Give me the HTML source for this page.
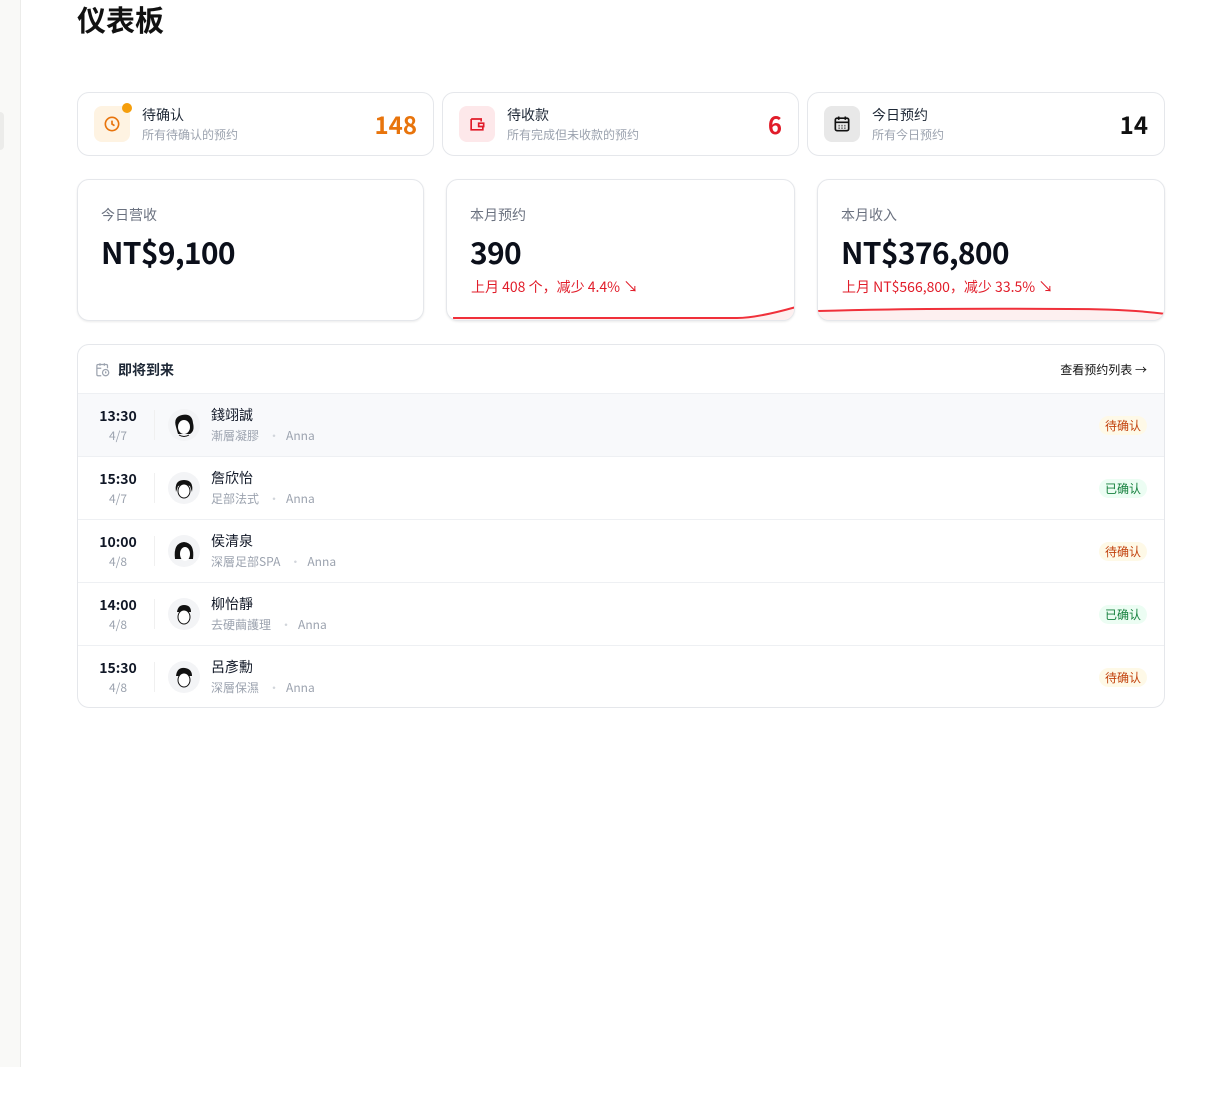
<!DOCTYPE html>
<html><head><meta charset="utf-8"><style>
*{box-sizing:border-box;margin:0;padding:0}
body{width:1220px;height:1100px;background:#fff;font-family:"Noto Sans CJK SC","Liberation Sans",sans-serif;color:#111827;position:relative;overflow:hidden}
.side{position:absolute;left:0;top:0;width:21px;height:1067px;background:#f9f9f7;border-right:1px solid #ececea}
.side i{position:absolute;left:0;top:112px;width:4px;height:38px;background:#ececea;border-radius:0 4px 4px 0}
h1{position:absolute;left:77px;top:-1px;font-size:29px;font-weight:700;line-height:40px;color:#111}
.c1{position:absolute;top:92px;height:64px;border:1px solid #e5e7eb;border-radius:12px;background:#fff}
.ic{position:absolute;left:16px;top:13px;width:36px;height:36px;border-radius:8px;display:flex;align-items:center;justify-content:center}
.t{position:absolute;left:64px;top:12px;font-size:14px;line-height:20px;color:#1f2937}
.s{position:absolute;left:64px;top:33px;font-size:12px;line-height:17px;color:#9ca3af}
.n{position:absolute;right:16px;top:15px;font-size:24px;line-height:32px;font-weight:700}
.c2{position:absolute;top:179px;height:142px;border:1px solid #e5e7eb;border-radius:12px;background:#fff;box-shadow:0 1px 2px rgba(0,0,0,.08);overflow:hidden}
.lb{position:absolute;left:23px;top:25px;font-size:14px;line-height:20px;color:#6b7280}
.v{position:absolute;left:23px;top:50px;font-size:30px;line-height:42px;font-weight:700;color:#0b0f1a;letter-spacing:-0.7px}
.d{position:absolute;left:24px;top:97px;font-size:14px;line-height:20px;color:#e11d2a}
.list{position:absolute;left:77px;top:344px;width:1088px;height:364px;border:1px solid #e5e7eb;border-radius:12px;overflow:hidden;background:#fff}
.hd{height:49px;border-bottom:1px solid #eef0f3;position:relative}
.hd b{position:absolute;left:40px;top:15px;font-size:14px;line-height:20px;color:#1f2937}
.hd span{position:absolute;right:17px;top:16px;font-size:12px;line-height:17px;color:#111}
.row{height:63px;border-bottom:1px solid #eef0f3;position:relative}
.row:last-child{border-bottom:none}
.tm{position:absolute;left:20px;top:12px;width:40px;text-align:center;font-size:14px;line-height:20px;font-weight:700;color:#111827}
.dt{position:absolute;left:20px;top:33px;width:40px;text-align:center;font-size:12px;line-height:17px;color:#9ca3af}
.sep{position:absolute;left:76px;top:16px;width:1px;height:30px;background:#f0f0f0}
.av{position:absolute;left:90px;top:15px;width:32px;height:32px;border-radius:50%;background:#f3f4f6;overflow:hidden}
.nm{position:absolute;left:133px;top:11px;font-size:14px;line-height:20px;color:#111827}
.sub{position:absolute;left:133px;top:33px;font-size:12px;line-height:17px;color:#9ca3af}
.sub em{font-style:normal;margin:0 6px 0 9px;color:#d1d5db}
.bd{position:absolute;right:17px;top:22px;font-size:12px;line-height:17px;padding:1px 6px;border-radius:10px}
.p{background:#fef9e7;color:#c2410c}.ok{background:#ecfdf3;color:#15803d}
</style></head><body>
<div class="side"><i></i></div>
<h1>仪表板</h1>

<div class="c1" style="left:77px;width:357px">
<div class="ic" style="background:#fef3e2"><svg width="20" height="20" viewBox="0 0 24 24" fill="none" stroke="#e8740c" stroke-width="2"><circle cx="12" cy="12" r="8"/><path d="M12 8v4l3 2"/></svg></div>
<div style="position:absolute;left:44px;top:10px;width:10px;height:10px;border-radius:50%;background:#f59e0b"></div>
<div class="t">待确认</div><div class="s">所有待确认的预约</div><div class="n" style="color:#e8740c">148</div></div>
<div class="c1" style="left:442px;width:357px">
<div class="ic" style="background:#fde8ea"><svg width="20" height="20" viewBox="0 0 24 24" fill="none" stroke="#e11d2a" stroke-width="2"><path d="M5 6h12v3M5 6v13h14v-4"/><path d="M14 11h6v4h-6z"/></svg></div>
<div class="t">待收款</div><div class="s">所有完成但未收款的预约</div><div class="n" style="color:#e11d2a">6</div></div>
<div class="c1" style="left:807px;width:358px">
<div class="ic" style="background:#e8e8e8"><svg width="20" height="20" viewBox="0 0 24 24" fill="none" stroke="#111" stroke-width="2"><rect x="4" y="5" width="16" height="15" rx="2"/><path d="M8 3v4M16 3v4M4 10h16M8 14h1M11.5 14h1M15 14h1M8 17h1M11.5 17h1M15 17h1"/></svg></div>
<div class="t">今日预约</div><div class="s">所有今日预约</div><div class="n" style="color:#111">14</div></div>

<div class="c2" style="left:77px;width:347px"><div class="lb">今日营收</div><div class="v">NT$9,100</div></div>
<div class="c2" style="left:446px;width:349px"><div class="lb">本月预约</div><div class="v">390</div><div class="d">上月 408 个，减少 4.4% <span style="font-size:15px">↘</span></div>
<svg style="position:absolute;left:0;bottom:0" width="349" height="20"><path d="M0 18 L290 18 Q310 18 349 8 L349 20 L0 20Z" fill="#fdf0f0"/><path d="M6 18 L290 18 Q310 18 349 7" fill="none" stroke="#f0303a" stroke-width="2"/></svg></div>
<div class="c2" style="left:817px;width:348px"><div class="lb">本月收入</div><div class="v">NT$376,800</div><div class="d">上月 NT$566,800，减少 33.5% <span style="font-size:15px">↘</span></div>
<svg style="position:absolute;left:0;bottom:0" width="348" height="20"><path d="M0 11 Q100 8 250 9 Q310 9 348 14 L348 20 L0 20Z" fill="#fdf0f0"/><path d="M0 11 Q100 8 250 9 Q310 9 348 14" fill="none" stroke="#f0303a" stroke-width="2"/></svg></div>

<div class="list">
<div class="hd"><svg style="position:absolute;left:17px;top:17px" width="15" height="15" viewBox="0 0 24 24" fill="none" stroke="#9ca3af" stroke-width="2"><path d="M20 10V6a2 2 0 0 0-2-2H5a2 2 0 0 0-2 2v14a2 2 0 0 0 2 2h5M8 2v4M15 2v4M3 10h7"/><circle cx="17" cy="17" r="5"/><path d="M17 15v2l1 1"/></svg><b>即将到来</b><span>查看预约列表 →</span></div>
<div class="row" style="background:#f8f9fb"><div class="tm">13:30</div><div class="dt">4/7</div><div class="sep"></div><div class="av"><svg width="32" height="32"><path d="M8 18 Q5 8 14 6 Q24 4 25 14 Q27 22 22 25 L10 25Z" fill="#111"/><ellipse cx="16" cy="18" rx="6" ry="7" fill="#fff"/><path d="M11 26 Q16 29 21 26" stroke="#111" fill="none"/></svg></div><div class="nm">錢翊誠</div><div class="sub">漸層凝膠<em>·</em>Anna</div><div class="bd p">待确认</div></div>
<div class="row"><div class="tm">15:30</div><div class="dt">4/7</div><div class="sep"></div><div class="av"><svg width="32" height="32"><path d="M8 20 Q6 8 16 8 Q26 8 24 20 L22 14 Q16 12 10 14Z" fill="#111"/><ellipse cx="16" cy="19" rx="6" ry="7" fill="#fff" stroke="#111"/></svg></div><div class="nm">詹欣怡</div><div class="sub">足部法式<em>·</em>Anna</div><div class="bd ok">已确认</div></div>
<div class="row"><div class="tm">10:00</div><div class="dt">4/8</div><div class="sep"></div><div class="av"><svg width="32" height="32"><path d="M7 24 Q5 8 16 7 Q27 8 25 24Z" fill="#111"/><ellipse cx="17" cy="19" rx="5" ry="7" fill="#fff"/></svg></div><div class="nm">侯清泉</div><div class="sub">深層足部SPA<em>·</em>Anna</div><div class="bd p">待确认</div></div>
<div class="row"><div class="tm">14:00</div><div class="dt">4/8</div><div class="sep"></div><div class="av"><svg width="32" height="32"><path d="M9 14 Q10 7 16 7 Q23 7 23 14Z" fill="#111"/><ellipse cx="16" cy="19" rx="6" ry="7" fill="#fff" stroke="#111"/></svg></div><div class="nm">柳怡靜</div><div class="sub">去硬繭護理<em>·</em>Anna</div><div class="bd ok">已确认</div></div>
<div class="row"><div class="tm">15:30</div><div class="dt">4/8</div><div class="sep"></div><div class="av"><svg width="32" height="32"><path d="M8 15 Q9 6 17 7 Q24 8 24 15Z" fill="#111"/><ellipse cx="16" cy="19" rx="6" ry="7" fill="#fff" stroke="#111"/></svg></div><div class="nm">呂彥勳</div><div class="sub">深層保濕<em>·</em>Anna</div><div class="bd p">待确认</div></div>
</div>
</body></html>
